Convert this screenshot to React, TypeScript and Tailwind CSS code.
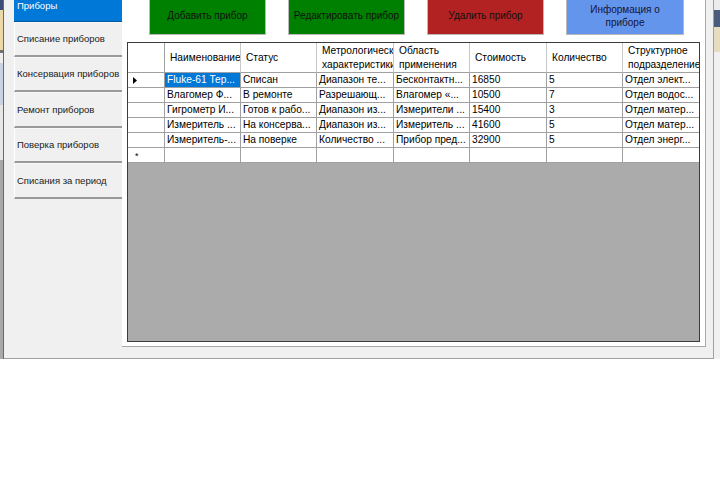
import React from "react";

const rows = [
  ["Fluke-61 Тер...", "Списан", "Диапазон те...", "Бесконтактн...", "16850", "5", "Отдел элект..."],
  ["Влагомер Ф...", "В ремонте", "Разрешающ...", "Влагомер «...", "10500", "7", "Отдел водос..."],
  ["Гигрометр И...", "Готов к рабо...", "Диапазон из...", "Измерители ...", "15400", "3", "Отдел матер..."],
  ["Измеритель ...", "На консерва...", "Диапазон из...", "Измеритель ...", "41600", "5", "Отдел матер..."],
  ["Измеритель-...", "На поверке", "Количество ...", "Прибор пред...", "32900", "5", "Отдел энерг..."],
];

const headers: string[][] = [
  ["Наименование"],
  ["Статус"],
  ["Метрологические", "характеристики"],
  ["Область", "применения"],
  ["Стоимость"],
  ["Количество"],
  ["Структурное", "подразделение"],
];

const sideItems = [
  { label: "Списание приборов", h: "h-[35px]" },
  { label: "Консервация приборов", h: "h-[35px]" },
  { label: "Ремонт приборов", h: "h-[36px]" },
  { label: "Поверка приборов", h: "h-[35px]" },
  { label: "Списания за период", h: "h-[36px]" },
];

export default function App() {
  return (
    <div className="w-[720px] h-[480px] bg-white overflow-hidden font-['Liberation_Sans',Arial,sans-serif] text-black">
      <div className="flex h-[359px]">
        {/* left strip: window behind */}
        <div className="w-[4px] flex flex-col border-r border-[#6a6a6a]">
          <div className="h-[10px] bg-[#3d4c74]" />
          <div className="h-[40px] bg-[#ecd7a6]" />
          <div className="h-[3px] bg-[#707070]" />
          <div className="h-[10px] bg-[#eeeeee]" />
          <div className="h-[42px] bg-[#c8d2e2]" />
          <div className="h-[55px] bg-[#e6e6e6]" />
          <div className="flex-1 bg-[#a9a9a9]" />
        </div>

        {/* main window */}
        <div className="w-[710px] bg-[#f0f0f0] border-r border-b border-[#a0a0a0] flex pl-[10px]">
          {/* sidebar */}
          <div className="w-[108px] flex flex-col text-[9.5px] leading-none">
            <div className="-mt-[12px] h-[34px] bg-[#0078d7] border-b border-[#005a9e] text-white flex items-center pl-[3px] pt-[2px]">
              Приборы
            </div>
            {sideItems.map((it) => (
              <div
                key={it.label}
                className={`${it.h} bg-[#f0f0f0] border-l border-t border-l-white border-t-[#f8f8f8] border-b-2 border-b-[#9a9a9a] flex items-center pl-[2px] text-[#1a1a1a]`}
              >
                {it.label}
              </div>
            ))}
          </div>

          {/* content panel */}
          <div className="w-[584px] h-[347px] bg-white border-r border-b border-[#a8a8a8] flex flex-col">
            {/* buttons */}
            <div className="flex gap-[22px] pl-[27px] -mt-[5px] text-[10px] leading-[13px]">
              <div className="w-[117px] h-[40px] bg-[#008000] border border-[#b9b9b9] flex items-center justify-center pt-[1px] text-[#101010]">
                Добавить прибор
              </div>
              <div className="w-[117px] h-[40px] bg-[#008000] border border-[#b9b9b9] flex items-center justify-center pt-[1px] text-[#101010]">
                Редактировать прибор
              </div>
              <div className="w-[117px] h-[40px] bg-[#b22222] border border-[#b9b9b9] flex items-center justify-center pt-[1px] text-[#101010]">
                Удалить прибор
              </div>
              <div className="w-[118px] h-[40px] bg-[#6495ed] border border-[#b9b9b9] flex flex-col items-center justify-center pt-[1px] text-[#141432]">
                <span>Информация о</span>
                <span>приборе</span>
              </div>
            </div>

            {/* data grid */}
            <div className="ml-[5px] mt-[7px] w-[573px] h-[300px] border border-[#3c3c3c] bg-[#ababab] overflow-hidden text-[10.2px] leading-none">
              <div className="grid grid-cols-[37px_76px_76px_77px_76px_77px_76px_76px] bg-white">
                {/* header */}
                <div className="h-[30px] border-r border-b border-[#a0a0a0]" />
                {headers.map((h, i) => (
                  <div
                    key={i}
                    className={`h-[30px] border-b border-b-[#a0a0a0] ${i < 6 ? "border-r border-r-[#c8c8c8]" : ""} flex flex-col justify-center pl-[5px] overflow-hidden whitespace-nowrap leading-[14px]`}
                  >
                    {h.map((t) => (
                      <span key={t}>{t}</span>
                    ))}
                  </div>
                ))}
                {/* rows */}
                {rows.map((r, ri) => (
                  <React.Fragment key={ri}>
                    <div className="h-[15px] border-r border-b border-[#a0a0a0] flex items-center pl-[5px]">
                      {ri === 0 && (
                        <svg width="4" height="7" viewBox="0 0 4 7">
                          <path d="M0 0 L4 3.5 L0 7 Z" fill="#000" />
                        </svg>
                      )}
                    </div>
                    {r.map((c, ci) => (
                      <div
                        key={ci}
                        className={`h-[15px] border-b border-[#a0a0a0] ${ci < 6 ? "border-r" : ""} flex items-center pl-[2px] overflow-hidden whitespace-nowrap ${ri === 0 && ci === 0 ? "bg-[#0078d7] text-white" : ""}`}
                      >
                        {c}
                      </div>
                    ))}
                  </React.Fragment>
                ))}
                {/* new row */}
                <div className="h-[15px] border-r border-b border-[#a0a0a0] flex items-center pl-[7px] pt-[2px] text-[9px]">
                  *
                </div>
                {[0, 1, 2, 3, 4, 5, 6].map((i) => (
                  <div key={i} className={`h-[15px] border-b border-[#a0a0a0] ${i < 6 ? "border-r" : ""}`} />
                ))}
              </div>
            </div>
          </div>
        </div>

        {/* right strip: window behind */}
        <div className="w-[6px] flex flex-col">
          <div className="h-[10px] bg-[#ececec]" />
          <div className="h-[17px] bg-[#4b5b7c]" />
          <div className="h-[25px] bg-[#e8dcc0]" />
          <div className="flex-1 bg-[#f0f0f0]" />
        </div>
      </div>
    </div>
  );
}
